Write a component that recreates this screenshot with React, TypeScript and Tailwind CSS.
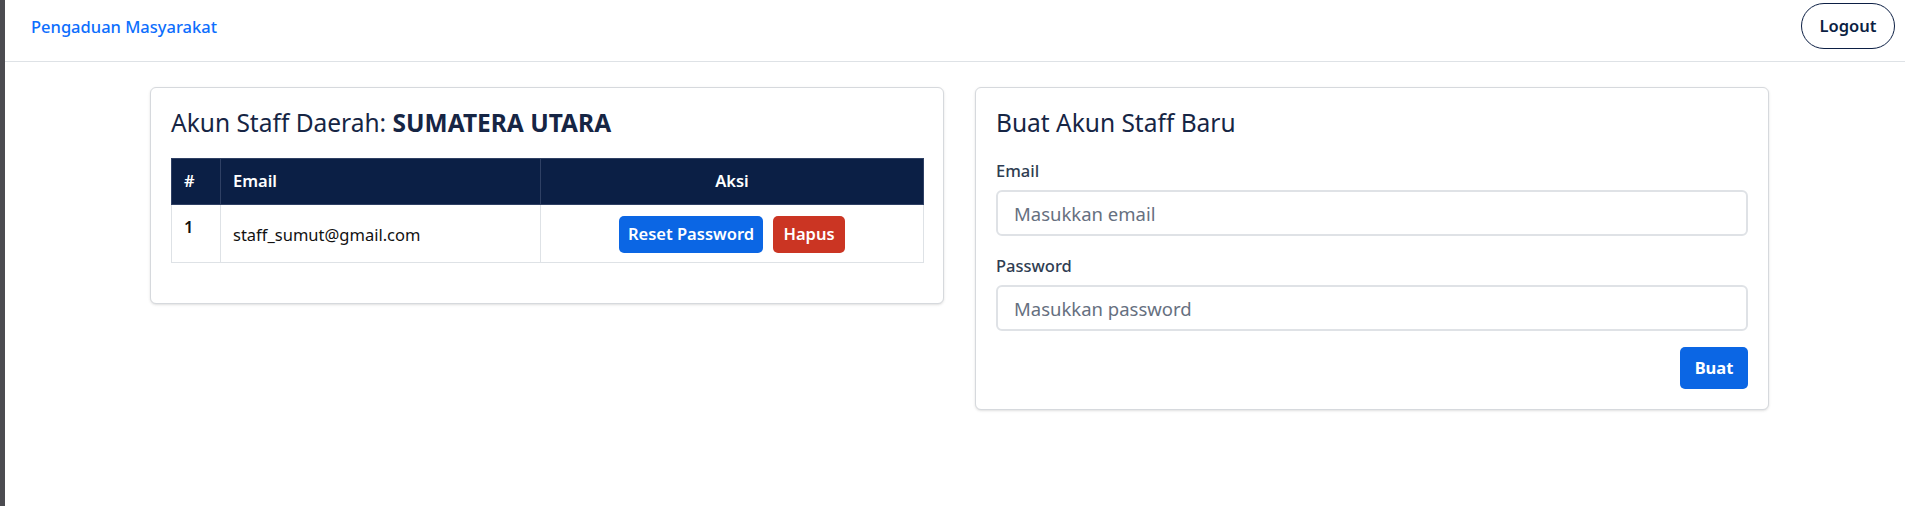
import React, { useState } from 'react';

interface StaffAccount {
  id: number;
  email: string;
}

const font = "font-['Noto_Sans','Open_Sans',sans-serif]";

const App: React.FC = () => {
  const [staff] = useState<StaffAccount[]>([{ id: 1, email: 'staff_sumut@gmail.com' }]);
  const [email, setEmail] = useState('');
  const [password, setPassword] = useState('');

  return (
    <div className={`flex h-[506px] overflow-hidden bg-white ${font}`}>
      <div className="w-[5px] shrink-0 bg-[#4b4b50]" />
      <div className="flex-1">
        <nav className="flex h-[62px] items-start justify-between border-b border-[#dee2e6] pl-[26px] pr-[10px]">
          <a href="#" className="mt-[15px] text-[16.5px] font-medium leading-[24px] text-[#0d6efd]">
            Pengaduan Masyarakat
          </a>
          <button className="mt-[3px] h-[46px] w-[94px] rounded-full border border-[#0c1f44] text-[16.5px] font-semibold text-[#0c1f44]">
            Logout
          </button>
        </nav>

        <div className="flex items-start gap-[31px] pl-[145px] pt-[25px]">
          <div className="w-[794px] rounded-[6px] border border-[#d6d9dd] bg-white p-5 shadow-sm">
            <h4 className="mb-[21px] text-[24.5px] leading-[29px] text-[#162544]">
              Akun Staff Daerah: <b className="font-bold">SUMATERA UTARA</b>
            </h4>
            <table className="mb-5 w-[752px] table-fixed border-collapse text-[16.5px]">
              <colgroup>
                <col className="w-[49px]" />
                <col className="w-[320px]" />
                <col className="w-[383px]" />
              </colgroup>
              <thead className="bg-[#0b1f45] text-white">
                <tr className="h-[46px]">
                  <th className="border border-[#2f4064] px-3 text-left font-semibold">#</th>
                  <th className="border border-[#2f4064] px-3 text-left font-semibold">Email</th>
                  <th className="border border-[#2f4064] px-3 text-center font-semibold">Aksi</th>
                </tr>
              </thead>
              <tbody className="text-[#111]">
                {staff.map((s) => (
                  <tr key={s.id} className="h-[58px]">
                    <th className="border border-[#dee2e6] px-3 pt-[10px] text-left align-top font-semibold">{s.id}</th>
                    <td className="border border-[#dee2e6] px-3 pt-[4px]">{s.email}</td>
                    <td className="border border-[#dee2e6] px-3 text-center">
                      <div className="flex justify-center gap-[10px] pt-[1px]">
                        <button className="h-[37px] w-[144px] rounded-[5px] bg-[#0b66e4] font-semibold text-white">
                          Reset Password
                        </button>
                        <button className="h-[37px] w-[72px] rounded-[5px] bg-[#cb3523] font-semibold text-white">
                          Hapus
                        </button>
                      </div>
                    </td>
                  </tr>
                ))}
              </tbody>
            </table>
          </div>

          <div className="w-[794px] rounded-[6px] border border-[#d6d9dd] bg-white p-5 shadow-sm">
            <h4 className="mb-[22px] text-[24.5px] leading-[29px] text-[#162544]">Buat Akun Staff Baru</h4>
            <form onSubmit={(e) => e.preventDefault()}>
              <label className="mb-[7px] block text-[16.5px] font-medium leading-[24px] text-[#2f3d52]">Email</label>
              <input
                type="email"
                value={email}
                onChange={(e) => setEmail(e.target.value)}
                placeholder="Masukkan email"
                className="block h-[46px] w-full rounded-[6px] border-2 border-[#dfe2e6] px-4 text-[18.5px] text-[#212529] outline-none placeholder:text-[#66707f]"
              />
              <label className="mb-[7px] mt-[18px] block text-[16.5px] font-medium leading-[24px] text-[#2f3d52]">
                Password
              </label>
              <input
                type="password"
                value={password}
                onChange={(e) => setPassword(e.target.value)}
                placeholder="Masukkan password"
                className="block h-[46px] w-full rounded-[6px] border-2 border-[#dfe2e6] px-4 text-[18.5px] text-[#212529] outline-none placeholder:text-[#66707f]"
              />
              <div className="mt-4 flex justify-end">
                <button className="h-[42px] w-[68px] rounded-[5px] bg-[#0b66e4] text-[16.5px] font-bold text-white">
                  Buat
                </button>
              </div>
            </form>
          </div>
        </div>
      </div>
    </div>
  );
};

export default App;
